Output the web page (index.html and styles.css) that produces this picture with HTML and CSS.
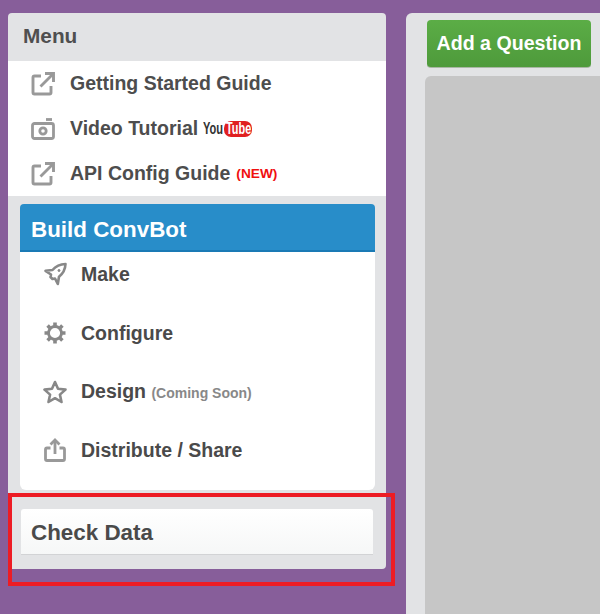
FILE: index.html
```html
<!DOCTYPE html>
<html lang="en">
<head>
<meta charset="utf-8">
<title>ConvBot Builder</title>
<link rel="stylesheet" href="styles.css">
</head>
<body>
<div class="app">
  <aside class="sidebar">
    <h2 class="menu-title">Menu</h2>
    <ul class="menu-list">
      <li class="menu-item">
        <svg class="icon" viewBox="0 0 24 24" fill="none" stroke="#999" stroke-width="2.900"><path d="M10 4H3.500A1.500 1.500 0 0 0 2 5.500V20.500A1.500 1.500 0 0 0 3.500 22H18.500A1.500 1.500 0 0 0 20 20.500V14"/><path d="M9.500 14.500L22 2"/><path d="M14 1.500H22.500V10"/></svg>
        <span>Getting Started Guide</span>
      </li>
      <li class="menu-item">
        <svg class="icon" viewBox="0 0 24 24" fill="none" stroke="#999" stroke-width="2.800"><rect x="1.500" y="6.500" width="21" height="15" rx="2"/><circle cx="12" cy="14" r="3.200"/><path d="M15 2.500H21"/></svg>
        <span>Video Tutorial</span>
        <span class="yt"><span class="yt-you"><span class="yt-you-text">You</span></span><span class="yt-tube"><span class="yt-tube-text">Tube</span></span></span>
      </li>
      <li class="menu-item">
        <svg class="icon" viewBox="0 0 24 24" fill="none" stroke="#999" stroke-width="2.900"><path d="M10 4H3.500A1.500 1.500 0 0 0 2 5.500V20.500A1.500 1.500 0 0 0 3.500 22H18.500A1.500 1.500 0 0 0 20 20.500V14"/><path d="M9.500 14.500L22 2"/><path d="M14 1.500H22.500V10"/></svg>
        <span>API Config Guide</span>
        <span class="new">(NEW)</span>
      </li>
    </ul>
    <section class="build">
      <h2 class="build-title">Build ConvBot</h2>
      <ul class="build-list">
        <li class="build-item">
          <svg class="icon-b" viewBox="0 0 24 24" fill="none" stroke="#888" stroke-width="2.600" stroke-linejoin="round"><path d="M22.500 2C16.500 2.200 12.500 4.500 9.500 8L2.500 8.800L8 12.500L7.500 15L9.500 17L12 16.500L14.800 22L16 14.800C20 11.500 22.300 7.500 22.500 2Z"/><circle cx="16" cy="8.500" r="1" fill="#888" stroke-width="1"/></svg>
          <span>Make</span>
        </li>
        <li class="build-item">
          <svg class="icon-b" viewBox="0 0 24 24" fill="none" stroke="#888"><circle cx="12" cy="12" r="6.500" stroke-width="2.800"/><path stroke-width="3.600" d="M12 1.500V5M12 19V22.500M1.500 12H5M19 12H22.500M4.600 4.600L7 7M17 17L19.400 19.400M4.600 19.400L7 17M17 7L19.400 4.600"/></svg>
          <span>Configure</span>
        </li>
        <li class="build-item">
          <svg class="icon-b" viewBox="0 0 24 24" fill="none" stroke="#888" stroke-width="2.600" stroke-linejoin="round"><path d="M12 2L15 8.800L22.500 9.600L16.900 14.600L18.500 22L12 18.200L5.500 22L7.100 14.600L1.500 9.600L9 8.800Z"/></svg>
          <span>Design <small class="soon">(Coming Soon)</small></span>
        </li>
        <li class="build-item">
          <svg class="icon-b" viewBox="0 0 24 24" fill="none" stroke="#999" stroke-width="2.800"><path d="M7.500 10H4A1.500 1.500 0 0 0 2.500 11.500V21A1.500 1.500 0 0 0 4 22.500H20A1.500 1.500 0 0 0 21.500 21V11.500A1.500 1.500 0 0 0 20 10H16.500"/><path d="M12 16V2.500"/><path d="M7.500 6.500L12 2L16.500 6.500"/></svg>
          <span>Distribute / Share</span>
        </li>
      </ul>
    </section>
    <div class="check">Check Data</div>
  </aside>
  <main class="workspace">
    <button class="add-btn" type="button">Add a Question</button>
    <div class="canvas"></div>
  </main>
</div>
<div class="highlight"></div>
</body>
</html>
```

FILE: styles.css
```css
* { box-sizing: border-box; }

html, body {
  margin: 0;
  height: 614px;
  overflow: hidden;
}

body {
  position: relative;
  background: #875e9a;
  font-family: "Liberation Sans", Arial, sans-serif;
  color: #4a4a4a;
}

.app {
  display: flex;
  gap: 20px;
  padding: 13px 0 0 8px;
  height: 614px;
}

.sidebar {
  flex: 0 0 378px;
  height: 556px;
  background: #e2e3e5;
  border-radius: 4px;
}

.menu-title {
  margin: 0;
  height: 48px;
  padding: 11px 0 0 15px;
  font-size: 20.800px;
  line-height: 23px;
  font-weight: 700;
  color: #4f4f4f;
}

.menu-list {
  list-style: none;
  margin: 0;
  padding: 0 0 0 23px;
  height: 135px;
  background: #fff;
}

.menu-item {
  display: flex;
  align-items: center;
  height: 45px;
  font-size: 19.500px;
  font-weight: 700;
  color: #4d4d4d;
}

.icon {
  flex: none;
  width: 24px;
  height: 24px;
  margin-right: 15px;
}

.yt {
  display: inline-flex;
  align-items: center;
  margin-left: 5px;
  font-size: 17px;
  font-weight: 700;
  line-height: 16px;
}

.yt-you {
  display: inline-block;
  width: 21px;
  color: #333;
}

.yt-you-text {
  display: inline-block;
  transform: scaleX(.65);
  transform-origin: left center;
}

.yt-tube {
  display: inline-block;
  width: 28px;
  height: 16px;
  padding-left: 2px;
  background: #e02020;
  color: #fff;
  border-radius: 7px;
  white-space: nowrap;
}

.yt-tube-text {
  display: inline-block;
  transform: scaleX(.64);
  transform-origin: left center;
}

.new {
  margin-left: 6px;
  font-size: 13.700px;
  font-weight: 700;
  color: #f01010;
}

.build {
  padding: 8px 11px 0 12px;
}

.build-title {
  margin: 0;
  height: 48px;
  padding: 12px 0 0 11px;
  background: #288dc9;
  border-bottom: 2px solid #1a7ab5;
  border-radius: 4px 4px 0 0;
  color: #fff;
  font-size: 22.400px;
  line-height: 27px;
  font-weight: 700;
}

.build-list {
  list-style: none;
  margin: 0;
  padding: 0 0 0 23px;
  height: 238px;
  background: #fff;
  border-radius: 0 0 6px 6px;
}

.build-item {
  display: flex;
  align-items: center;
  height: 58.500px;
  font-size: 19.500px;
  font-weight: 700;
  color: #4a4a4a;
}

.build-item:first-child {
  height: 44px;
  margin-bottom: 8px;
}

.icon-b {
  flex: none;
  width: 24px;
  height: 24px;
  margin-right: 14px;
}

.soon {
  font-size: 14px;
  font-weight: 700;
  color: #888;
}

.check {
  margin: 19px 13px 0;
  height: 46px;
  padding: 10px 0 0 10px;
  background: linear-gradient(#fff, #f6f7f7);
  border-bottom: 1px solid #d2d3d5;
  border-radius: 3px 3px 0 0;
  font-size: 22.400px;
  line-height: 28px;
  font-weight: 700;
  color: #4a4a4a;
}

.workspace {
  flex: 1;
  min-width: 0;
  padding: 7px 0 0 19px;
  background: #e2e3e5;
  border-radius: 6px 0 0 0;
}

.add-btn {
  display: block;
  width: 164px;
  height: 48px;
  margin: 0 0 8px 2px;
  padding: 0;
  border: 0;
  border-bottom: 1px solid #a9b7a4;
  border-radius: 4px;
  background: linear-gradient(#5bad46, #4e9a3b);
  color: #fff;
  font: 700 19.600px "Liberation Sans", Arial, sans-serif;
}

.canvas {
  height: 538px;
  background: #c6c6c6;
  border-radius: 6px 0 0 0;
}

.highlight {
  position: absolute;
  left: 8px;
  top: 493px;
  width: 387px;
  height: 93px;
  border: 4px solid #ed1c24;
}
```
